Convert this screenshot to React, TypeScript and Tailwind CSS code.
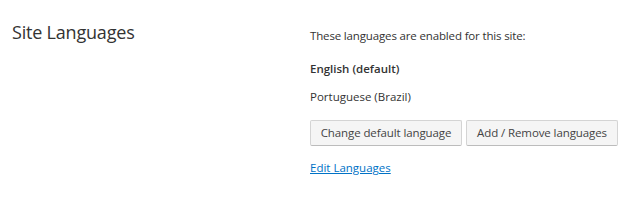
export default function App() {
  return (
    <div
      className="w-[630px] h-[200px] bg-white flex text-[#333333]"
      style={{ fontFamily: '"Open Sans", "Noto Sans", sans-serif' }}
    >
      {/* Section title */}
      <div className="w-[310px] pl-3 pt-[20px]">
        <h2 className="text-[18px] font-normal leading-6 text-[#333333] tracking-[-0.2px]">Site Languages</h2>
      </div>

      {/* Languages */}
      <div className="flex-1 pt-[28px] text-[11.5px]">
        <p className="leading-4 tracking-[-0.15px]">These languages are enabled for this site:</p>

        <ul className="mt-[17px] space-y-[12px]">
          <li className="font-semibold leading-4">English (default)</li>
          <li className="leading-4">Portuguese (Brazil)</li>
        </ul>

        <div className="mt-[15px] flex gap-1">
          <button className="w-[152px] h-[26px] bg-[#f5f5f5] border border-[#d4d4d4] border-b-[#bcbcbc] rounded-[2px] text-[11.5px] tracking-[-0.1px] text-[#444444]">
            Change default language
          </button>
          <button className="w-[152px] h-[26px] bg-[#f5f5f5] border border-[#d4d4d4] border-b-[#bcbcbc] rounded-[2px] text-[11.5px] tracking-[-0.1px] text-[#444444]">
            Add / Remove languages
          </button>
        </div>

        <a href="#" className="inline-block mt-[14px] text-[11.5px] leading-4 text-[#0072c6] underline">
          Edit Languages
        </a>
      </div>
    </div>
  );
}
